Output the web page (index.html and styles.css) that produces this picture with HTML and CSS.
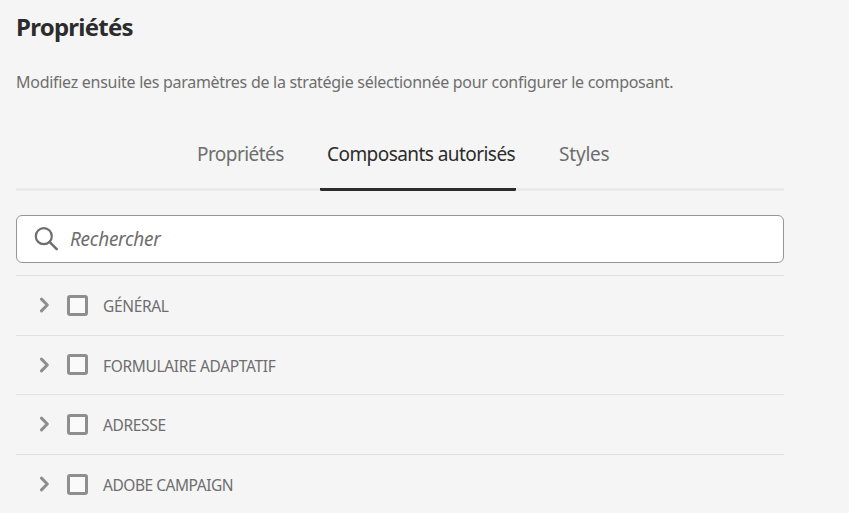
FILE: index.html
```html
<!DOCTYPE html>
<html lang="fr">
<head>
<meta charset="utf-8">
<title>Propriétés</title>
<link rel="stylesheet" href="styles.css">
</head>
<body>
<main class="panel">
  <h1>Propriétés</h1>
  <p class="intro">Modifiez ensuite les paramètres de la stratégie sélectionnée pour configurer le composant.</p>
  <nav class="tabs">
    <a class="tab first">Propriétés</a>
    <a class="tab active">Composants autorisés</a>
    <a class="tab last">Styles</a>
  </nav>
  <label class="search">
    <svg width="26" height="26" viewBox="0 0 26 26" fill="none" stroke="#6e6e6e" stroke-width="2.2" stroke-linecap="round"><circle cx="9.8" cy="10.2" r="8"/><path d="M15.8 16.2L22.7 23.1" stroke-width="2.5"/></svg>
    <span>Rechercher</span>
  </label>
  <ul class="groups">
    <li><svg class="chevron" width="12" height="18" viewBox="0 0 12 18"><path d="M3.5 3.2L9.3 9L3.5 14.8"/></svg><i class="box"></i><span>GÉNÉRAL</span></li>
    <li><svg class="chevron" width="12" height="18" viewBox="0 0 12 18"><path d="M3.5 3.2L9.3 9L3.5 14.8"/></svg><i class="box"></i><span>FORMULAIRE ADAPTATIF</span></li>
    <li><svg class="chevron" width="12" height="18" viewBox="0 0 12 18"><path d="M3.5 3.2L9.3 9L3.5 14.8"/></svg><i class="box"></i><span>ADRESSE</span></li>
    <li><svg class="chevron" width="12" height="18" viewBox="0 0 12 18"><path d="M3.5 3.2L9.3 9L3.5 14.8"/></svg><i class="box"></i><span class="tight">ADOBE CAMPAIGN</span></li>
  </ul>
</main>
</body>
</html>
```
FILE: styles.css
```css
* { box-sizing: border-box; }
body { margin: 0; background: #f5f5f5; color: #6e6e6e; font-family: "Noto Sans", sans-serif; overflow: hidden; }
.panel { width: 784px; padding-left: 16px; }
h1 { margin: 0; padding-top: 10px; height: 66px; font-size: 24px; line-height: 34px; font-weight: 700; color: #2c2c2c; letter-spacing: -0.75px; }
.intro { margin: 0; height: 56px; font-size: 16px; line-height: 32px; letter-spacing: -0.28px; white-space: nowrap; }
.tabs { display: flex; height: 69px; padding-left: 181px; border-bottom: 3px solid #eaeaea; font-size: 19px; line-height: 64px; letter-spacing: -0.56px; white-space: nowrap; }
.tab { height: 69px; }
.first { width: 123px; }
.active { width: 196px; padding-left: 7px; color: #2c2c2c; background: linear-gradient(#2c2c2c, #2c2c2c) bottom / 100% 3px no-repeat; border-radius: 0 0 1.5px 1.5px; }
.last { padding-left: 43px; letter-spacing: -0.2px; }
.search { display: flex; align-items: center; gap: 10px; height: 48px; margin-top: 24px; padding-left: 17px; background: #fff; border: 1px solid #959595; border-radius: 6px; font-size: 19px; font-style: italic; letter-spacing: -0.27px; }
.groups { list-style: none; margin: 12px 0 0; padding: 0; }
.groups li { display: flex; align-items: center; height: 59.6px; padding-left: 22px; border-top: 1px solid #e1e1e1; font-size: 15.5px; letter-spacing: -0.34px; }
.groups span { padding-top: 2px; }
.groups .tight { letter-spacing: -0.47px; }
.chevron { fill: none; stroke: #8e8e8e; stroke-width: 3.1; stroke-linecap: round; stroke-linejoin: round; }
.box { width: 21px; height: 21px; margin: 0 15px 0 17px; background: #fafafa; border: 3px solid #8e8e8e; border-radius: 3px; }
```
